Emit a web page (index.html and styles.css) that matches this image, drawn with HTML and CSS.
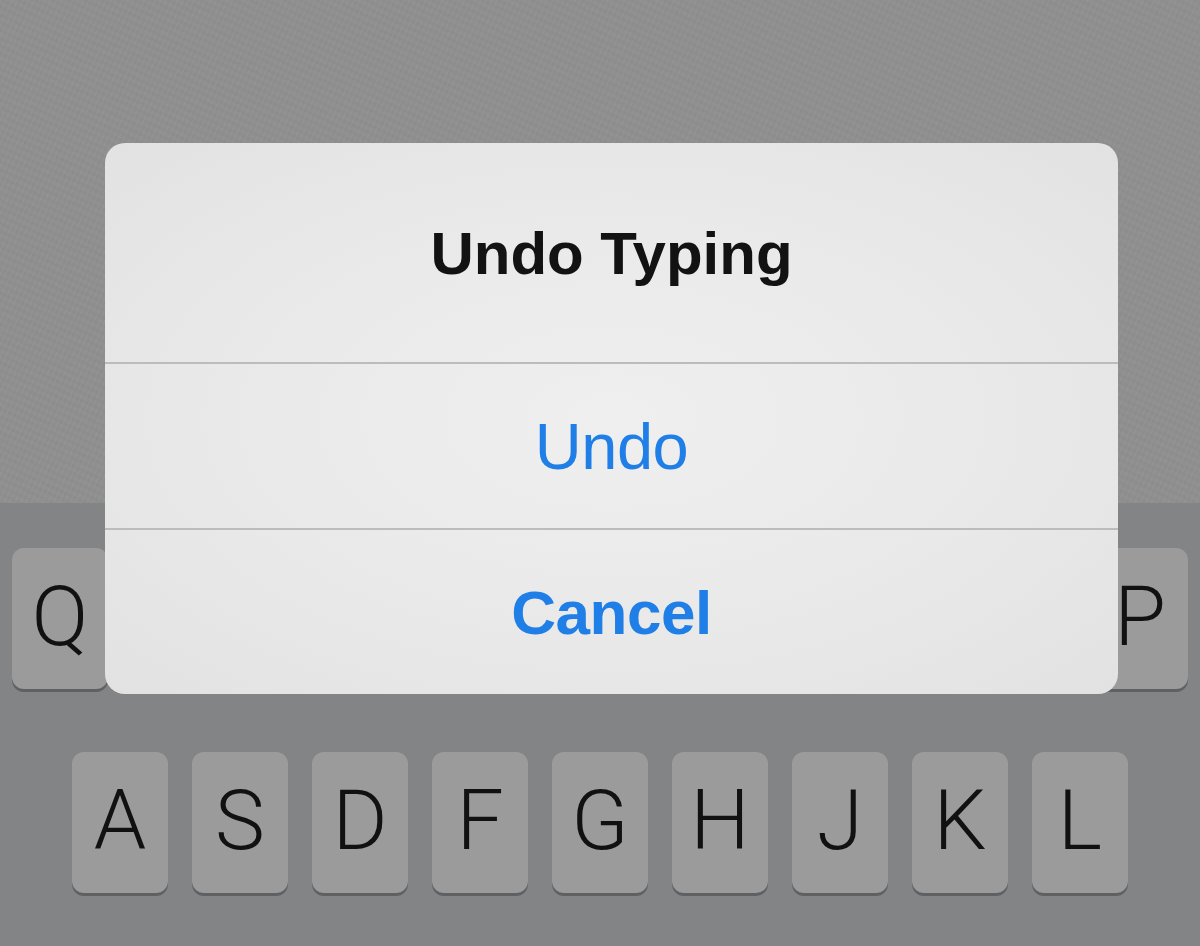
FILE: index.html
```html
<!DOCTYPE html>
<html>
<head>
<meta charset="utf-8">
<link rel="stylesheet" href="styles.css">
</head>
<body>
<div class="screen">
  <div class="backdrop"></div>
  <div class="keyboard">
    <div class="row row-top">
      <div class="key">Q</div><div class="key"></div><div class="key"></div><div class="key"></div><div class="key"></div><div class="key"></div><div class="key"></div><div class="key"></div><div class="key"></div><div class="key">P</div>
    </div>
    <div class="row row-mid">
      <div class="key">A</div><div class="key">S</div><div class="key">D</div><div class="key">F</div><div class="key">G</div><div class="key">H</div><div class="key">J</div><div class="key">K</div><div class="key">L</div>
    </div>
  </div>
  <div class="alert">
    <div class="alert-title">Undo Typing</div>
    <div class="alert-btn">Undo</div>
    <div class="alert-btn cancel">Cancel</div>
  </div>
</div>
</body>
</html>
```
FILE: styles.css
```css
html, body {
  margin: 0;
  padding: 0;
}
body {
  width: 1200px;
  height: 946px;
  overflow: hidden;
  font-family: "Liberation Sans", Arial, sans-serif;
}
.screen {
  position: relative;
  width: 1200px;
  height: 946px;
  display: flex;
  flex-direction: column;
  overflow: hidden;
}
.backdrop {
  height: 503px;
  flex: none;
  background-color: #909090;
  background-image:
    repeating-linear-gradient(115deg, rgba(255,255,255,0.012) 0 2px, rgba(0,0,0,0.012) 2px 5px),
    repeating-linear-gradient(25deg, rgba(0,0,0,0.012) 0 3px, rgba(255,255,255,0.012) 3px 7px);
}
.keyboard {
  flex: 1;
  background: #838486;
  padding-top: 45px;
  display: flex;
  flex-direction: column;
  gap: 63px;
}
.row {
  display: flex;
  gap: 24px;
}
.row-top {
  padding-left: 12px;
}
.row-mid {
  padding-left: 72px;
}
.key {
  width: 96px;
  height: 141px;
  flex: none;
  border-radius: 12px;
  background: #9b9b9b;
  box-shadow: 0 3px 0 #5f6062;
  display: flex;
  align-items: center;
  justify-content: center;
  font-family: Roboto, "Liberation Sans", sans-serif;
  font-weight: 300;
  font-size: 84px;
  color: #111;
  line-height: 1;
  padding-bottom: 4px;
  box-sizing: border-box;
}
.alert {
  position: absolute;
  left: 105px;
  top: 143px;
  width: 1013px;
  height: 551px;
  border-radius: 20px;
  background: radial-gradient(ellipse at 50% 50%, #efefef 0%, #e9e9e9 55%, #e2e2e2 100%);
  display: flex;
  flex-direction: column;
  overflow: hidden;
}
.alert-title {
  height: 221px;
  flex: none;
  display: flex;
  align-items: center;
  justify-content: center;
  font-weight: 700;
  font-size: 60px;
  color: #121212;
  border-bottom: 2px solid #bcbcbc;
  padding-top: 2px;
  box-sizing: border-box;
}
.alert-btn {
  flex: 1;
  display: flex;
  align-items: center;
  justify-content: center;
  font-size: 65px;
  color: #1f7fe7;
  letter-spacing: -0.5px;
}
.alert-btn + .alert-btn {
  border-top: 2px solid #bcbcbc;
}
.cancel {
  font-weight: 700;
  font-size: 62px;
}
```
